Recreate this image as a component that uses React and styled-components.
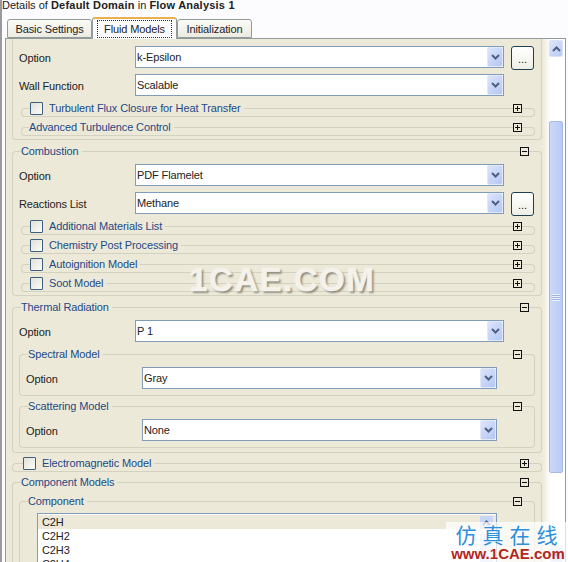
import React from "react";
import styled, { createGlobalStyle } from "styled-components";

const LINE = "#d3d1bf";
const Global = createGlobalStyle`
  html, body { margin: 0; padding: 0; background: #fcfcfe; overflow: hidden; }
  #root { width: 568px; height: 562px; overflow: hidden; }
  * { box-sizing: border-box; }
`;
const Page = styled.div`
  position: relative; width: 568px; height: 562px; overflow: hidden;
  display: flex; flex-direction: column;
  padding-left: 3px; border-left: 2px solid #9a9a9a;
  font-family: "Liberation Sans", Arial, sans-serif; font-size: 11px; color: #222; letter-spacing: -0.12px;
`;
const Title = styled.div`height: 17px; line-height: 10px; margin-left: -3px; white-space: nowrap; letter-spacing: 0; b { font-weight: 700; letter-spacing: 0.22px; }`;
const TabBar = styled.div`display: flex; align-items: flex-end; height: 21px; padding-left: 2px; position: relative; z-index: 1;`;
const Tab = styled.div`
  height: ${p => (p.$active ? 22 : 19)}px; margin-bottom: ${p => (p.$active ? -1 : 0)}px;
  width: ${p => p.$w}px; flex: none;
  background: ${p => (p.$active ? "#fcfcfe" : "linear-gradient(#fbfbf7, #ecebe1)")};
  border: 1px solid #919b9c; border-bottom: ${p => (p.$active ? "none" : "1px solid #919b9c")};
  border-top: ${p => (p.$active ? "2px solid #e7b24f" : "1px solid #919b9c")};
  border-radius: 3px 3px 0 0;
  display: flex; align-items: center; justify-content: center;
  span { ${p => p.$active && "outline: 1px dotted #333; outline-offset: -1px; width: 75px; height: 18px; display: flex; align-items: center; justify-content: center;"} }
`;
const Panel = styled.div`
  width: 561px; flex: 1; min-height: 0; display: flex;
  border: 1px solid #919b9c; border-bottom: none; background: #ece9d8;
`;
const Pane = styled.div`width: 536px; padding-left: 6px; overflow: hidden; flex: none;`;
const Head = styled.div`
  display: flex; align-items: center; height: 15px; margin-top: ${p => p.$mt || 0}px;
`;
const Cap = styled.i`
  display: block; flex: none; width: ${p => p.$w || 9}px; height: ${p => (p.$pill ? 9 : 8)}px; align-self: flex-end;
  margin-bottom: ${p => (p.$pill ? -1 : 0)}px;
  border-top: 1px solid ${LINE};
  ${p => (p.$right ? `border-right: 1px solid ${LINE};` : `border-left: 1px solid ${LINE};`)}
  ${p => p.$pill && `border-bottom: 1px solid ${LINE};`}
  border-radius: ${p => (p.$right ? (p.$pill ? "0 4px 4px 0" : "0 4px 0 0") : p.$pill ? "4px 0 0 4px" : "4px 0 0 0")};
`;
const Rule = styled.i`display: block; flex: 1; height: 1px; background: ${LINE};`;
const Legend = styled.span`color: #1d4a86; padding-right: 3px; white-space: nowrap; line-height: 15px; margin-top: -1px;`;
const Check = styled.i`
  display: block; flex: none; width: 13px; height: 13px; margin-right: 6px;
  border: 1px solid #3c5f80; border-radius: 1px; background: linear-gradient(135deg, #e2e1d6, #fbfbf9);
`;
const Toggle = styled.svg`display: block; flex: none; width: 9px; height: 9px; margin-top: -1px;`;
const Body = styled.div`
  border: 1px solid ${LINE}; border-top: none; border-radius: 0 0 4px 4px;
  padding: ${p => p.$pt ?? 5}px 0 ${p => p.$pb ?? 3}px 0;
  display: flex; flex-direction: column;
`;
const PillBottom = styled.div`height: 1px; margin: 0 4px; background: ${LINE};`;
const Strip = styled.div`margin: ${p => p.$mt ?? 3}px ${p => p.$mr ?? 6}px 0 ${p => p.$ml ?? 8}px;`;
const Row = styled.div`display: flex; height: 22px; margin-top: ${p => p.$mt || 0}px; padding-left: 6px;`;
const Label = styled.div`flex: none; width: 116px; padding-top: 5px; line-height: 15px; white-space: nowrap;`;
const Combo = styled.div`
  flex: 1; min-width: 0; height: 22px; background: #fff; border: 1px solid #7f9db9; display: flex; align-items: center;
  padding-left: 1px; line-height: 15px; position: relative;
`;
const Slot = styled.div`flex: none; width: 37px; padding-left: 7px;`;
const Arrow = styled.div`
  position: absolute; right: 0; top: 0; bottom: 0; width: 16px;
  background: linear-gradient(135deg, #dbe4fa, #b4c7f4); border: 1px solid #e3e9f8; border-radius: 2px;
  display: flex; align-items: center; justify-content: center;
`;
const Dots = styled.div`
  width: 23px; height: 24px; border: 1px solid #1e3f55; border-radius: 3px;
  background: linear-gradient(#fff, #f0efe6); display: flex; align-items: flex-end; justify-content: center;
  line-height: 15px; padding-bottom: 2px;
`;
const List = styled.div`
  margin: 0 37px 0 17px; height: 60px; background: #fff; border: 1px solid #7f9db9; border-bottom: none; padding-top: 1px; position: relative;
`;
const Item = styled.div`height: 14px; line-height: 14px; padding-left: 4px; background: ${p => (p.$sel ? "#ece9d8" : "transparent")};`;
const ListScroll = styled.div`
  position: absolute; right: 3px; top: 2px; width: 13px; display: flex; flex-direction: column; gap: 5px;
`;
const ListUp = styled.div`
  height: 13px; background: #c7d5f7; display: flex; align-items: center; justify-content: center;
`;
const ListThumb = styled.div`height: 30px; background: #d3def8;`;
const Bar = styled.div`
  flex: 1; background: linear-gradient(90deg, #ece9d8, #faf9f5 28%, #fff 40%); display: flex; flex-direction: column; padding: 1px 2px 0 7px;
`;
const BarBtn = styled.div`
  height: 17px; margin-top: ${p => p.$mt || 0}px; border: 1px solid #d8e2f8; border-radius: 2px; background: linear-gradient(135deg,#dde6fb,#b9caf5);
  display: flex; align-items: center; justify-content: center; flex: none;
`;
const Thumb = styled.div`
  margin-top: 64px; height: 352px; flex: none; border: 1px solid #a6b9e6; border-radius: 2px;
  background: linear-gradient(90deg,#cbd8f8,#b9cbf6); display: flex; align-items: center; justify-content: center;
`;
const Grip = styled.div`width: 8px; height: 7px; background: repeating-linear-gradient(#eef2fd 0 1px, #9fb3e4 1px 2px);`;
const Mark = styled.div`
  position: absolute; left: 187px; top: 262px; font: 700 33px/36px "Liberation Sans", sans-serif; letter-spacing: 1.5px;
  color: #f4f2ea; -webkit-text-stroke: 0.6px #f4f2ea; text-shadow: 2px 2px 2px #8f8d82; white-space: nowrap;
`;
const Stamp = styled.div`
  position: absolute; right: 0; bottom: 0; width: 122px; height: 40px; background: rgba(255,255,255,0.72);
  display: flex; flex-direction: column; align-items: center; letter-spacing: 0;
`;
const StampCn = styled.div`font: 400 21px/24px "Noto Sans CJK SC", sans-serif; color: #2d90dc; letter-spacing: 6px; margin-left: 5px; height: 25px;`;
const StampEn = styled.div`font: 700 15px/13px "Liberation Sans", sans-serif; color: #b3261e; white-space: nowrap; margin-left: 2px;`;

const Tg = ({ plus }) => (
  <Toggle viewBox="0 0 9 9">
    <rect x=".5" y=".5" width="8" height="8" fill="#ece9d8" stroke="#111" />
    <path d={plus ? "M2 4.5h5M4.5 2v5" : "M2 4.5h5"} stroke="#111" />
  </Toggle>
);
const Chev = () => (
  <svg width="9" height="6" viewBox="0 0 9 6"><path d="M1 1l3.5 3.5L8 1" fill="none" stroke="#4d6185" strokeWidth="2" /></svg>
);
const ChevUp = () => (
  <svg width="9" height="6" viewBox="0 0 9 6"><path d="M1 5l3.5-3.5L8 5" fill="none" stroke="#4d6185" strokeWidth="2" /></svg>
);

const StripRow = ({ text, check, mt, ml, mr, cap }) => (
  <Strip $mt={mt} $ml={ml} $mr={mr}>
    <Head>
      <Cap $pill $w={cap || (check ? 9 : 8)} />
      {check && <Check />}
      <Legend>{text}</Legend>
      <Rule />
      <Tg plus />
      <Cap $pill $right $w={13} />
    </Head>
    <PillBottom />
  </Strip>
);
const Field = ({ label, value, mt, dots }) => (
  <Row $mt={mt}>
    <Label>{label}</Label>
    <Combo>{value}<Arrow><Chev /></Arrow></Combo>
    <Slot>{dots && <Dots>...</Dots>}</Slot>
  </Row>
);
const GroupHead = ({ title, mt }) => (
  <Head $mt={mt}>
    <Cap $w={9} />
    <Legend>{title}</Legend>
    <Rule />
    <Tg />
    <Cap $right $w={13} />
  </Head>
);

export default function App() {
  return (
    <Page>
      <Global />
      <Title>Details of <b>Default Domain</b> in <b>Flow Analysis 1</b></Title>
      <TabBar>
        <Tab $w={85}><span>Basic Settings</span></Tab>
        <Tab $active $w={85}><span>Fluid Models</span></Tab>
        <Tab $w={75}><span>Initialization</span></Tab>
      </TabBar>
      <Panel>
        <Pane>
          <Body $pt={7}>
            <Field label="Option" value="k-Epsilon" dots />
            <Field label="Wall Function" value="Scalable" mt={6} />
            <StripRow text="Turbulent Flux Closure for Heat Transfer" check mt={5} />
            <StripRow text="Advanced Turbulence Control" />
          </Body>
          <GroupHead title="Combustion" mt={4} />
          <Body>
            <Field label="Option" value="PDF Flamelet" />
            <Field label="Reactions List" value="Methane" mt={6} dots />
            <StripRow text="Additional Materials List" check mt={5} />
            <StripRow text="Chemistry Post Processing" check />
            <StripRow text="Autoignition Model" check />
            <StripRow text="Soot Model" check />
          </Body>
          <GroupHead title="Thermal Radiation" mt={4} />
          <Body $pb={4}>
            <Field label="Option" value="P 1" />
            <Strip $mt={5} $ml={6}>
              <GroupHead title="Spectral Model" />
              <Body $pb={6}>
                <Field label="Option" value="Gray" />
              </Body>
            </Strip>
            <Strip $mt={3} $ml={6}>
              <GroupHead title="Scattering Model" />
              <Body $pb={6}>
                <Field label="Option" value="None" />
              </Body>
            </Strip>
          </Body>
          <StripRow text="Electromagnetic Model" check mt={3} ml={0} mr={0} cap={11} />
          <GroupHead title="Component Models" mt={3} />
          <Body $pt={4}>
            <Strip $mt={0} $ml={6}>
              <GroupHead title="Component" />
              <Body $pt={4}>
                <List>
                  <Item $sel>C2H</Item>
                  <Item>C2H2</Item>
                  <Item>C2H3</Item>
                  <Item>C2H4</Item>
                  <ListScroll>
                    <ListUp><ChevUp /></ListUp>
                    <ListThumb />
                  </ListScroll>
                </List>
              </Body>
            </Strip>
          </Body>
        </Pane>
        <Bar>
          <BarBtn><ChevUp /></BarBtn>
          <Thumb><Grip /></Thumb>
          <BarBtn $mt={72}><Chev /></BarBtn>
        </Bar>
      </Panel>
      <Mark>1CAE.COM</Mark>
      <Stamp>
        <StampCn>仿真在线</StampCn>
        <StampEn>www.1CAE.com</StampEn>
      </Stamp>
    </Page>
  );
}
